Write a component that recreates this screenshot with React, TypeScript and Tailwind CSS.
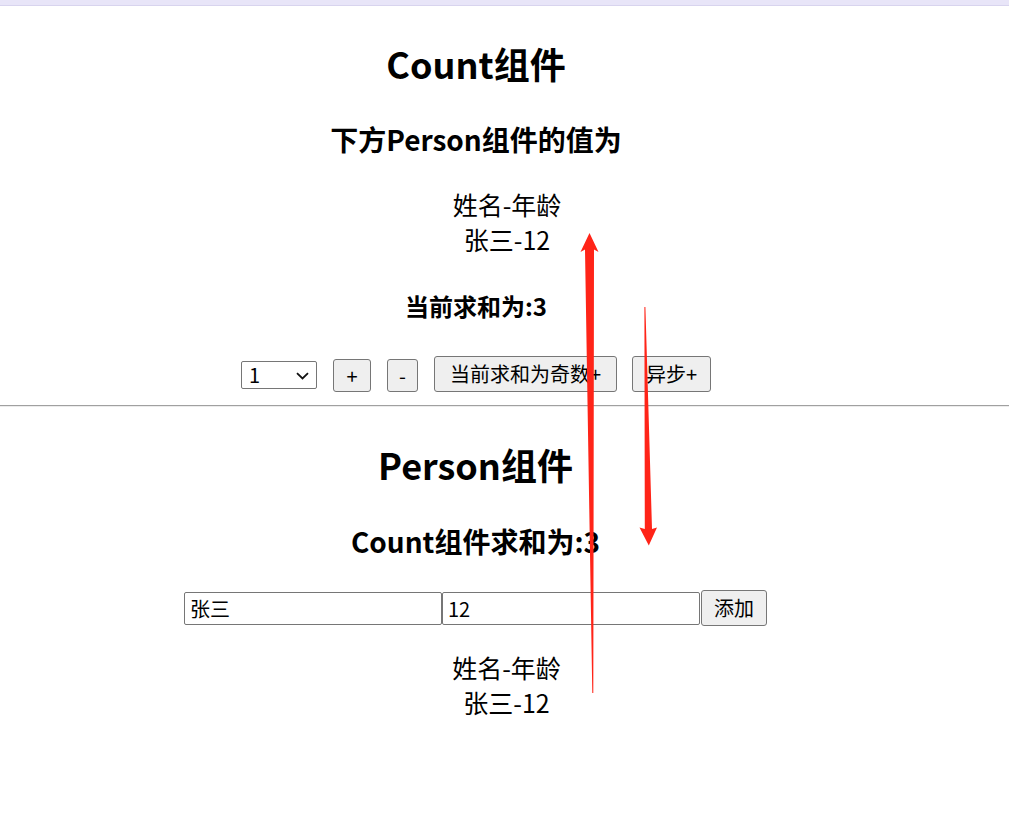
import { useState } from "react";

type Person = { id: number; name: string; age: number };

function PersonList({ people }: { people: Person[] }) {
  return (
    <ul className="pl-[62px] text-[25px] leading-[35px]">
      <li>姓名-年龄</li>
      {people.map((p) => (
        <li key={p.id}>
          {p.name}-{p.age}
        </li>
      ))}
    </ul>
  );
}

function Arrows() {
  return (
    <svg
      className="pointer-events-none absolute left-0 top-0"
      width="1009"
      height="833"
      viewBox="0 0 1009 833"
    >
      {/* long arrow pointing up */}
      <polygon
        fill="#ff2418"
        points="589.5,233 598.5,252 594,249.5 593.3,693 592.3,693 585,249.5 580.5,252"
      />
      {/* short arrow pointing down */}
      <polygon
        fill="#ff2418"
        points="644.4,307 645.4,307 652,529 657,527.5 648.8,545.5 639.5,527.5 644.8,529"
      />
    </svg>
  );
}

export default function App() {
  const [people] = useState<Person[]>([{ id: 1, name: "张三", age: 12 }]);
  const [step, setStep] = useState("1");
  const [sum, setSum] = useState(3);
  const [name, setName] = useState("张三");
  const [age, setAge] = useState("12");

  const n = Number(step);
  const btn =
    "h-[36px] rounded-[3px] border border-[#767676] bg-[#efefef] text-[20px] leading-[34px] text-black";
  const smallBtn =
    "h-[33px] rounded-[3px] border border-[#767676] bg-[#efefef] text-[20px] leading-[31px] text-black";

  return (
    <div className="relative h-[833px] w-full overflow-hidden bg-white text-black font-[family-name:'Noto_Sans_CJK_SC',sans-serif]">
      <div className="h-[6px] border-b border-[#d8d4ee] bg-[#e8e5f8]" />

      {/* Count */}
      <div className="w-[952px] text-center">
        <h1 className="mt-[33px] text-[36px] font-bold leading-[48px]">Count组件</h1>
        <h2 className="mt-[32px] text-[28px] font-bold leading-[40px]">下方Person组件的值为</h2>
        <div className="mt-[28px]">
          <PersonList people={people} />
        </div>
        <h3 className="mt-[32px] text-[24px] font-bold leading-[34px]">当前求和为:{sum}</h3>
        <div className="mt-[33px] flex h-[36px] items-end justify-center">
          <div className="relative mb-[3px]">
            <select
              value={step}
              onChange={(e) => setStep(e.target.value)}
              className="h-[28px] w-[76px] appearance-none rounded-[2px] border border-[#767676] bg-white pl-[7px] text-[20px] leading-[26px] outline-none"
            >
              <option value="1">1</option>
              <option value="2">2</option>
              <option value="3">3</option>
            </select>
            <svg
              className="pointer-events-none absolute right-[8px] top-[11px]"
              width="13"
              height="8"
              viewBox="0 0 13 8"
            >
              <path d="M1 1.2 L6.5 6.5 L12 1.2" fill="none" stroke="#111" strokeWidth="1.8" />
            </svg>
          </div>
          <button className={`ml-[16px] w-[38px] ${smallBtn}`} onClick={() => setSum(sum + n)}>
            +
          </button>
          <button className={`ml-[16px] w-[31px] ${smallBtn}`} onClick={() => setSum(sum - n)}>
            -
          </button>
          <button
            className={`ml-[16px] w-[183px] ${btn}`}
            onClick={() => sum % 2 !== 0 && setSum(sum + n)}
          >
            当前求和为奇数+
          </button>
          <button
            className={`ml-[15px] w-[79px] ${btn}`}
            onClick={() => setTimeout(() => setSum((s) => s + n), 500)}
          >
            异步+
          </button>
        </div>
      </div>

      <div className="mt-[13px] h-[2px] border-t border-[#a0a0a0] bg-[#ececec]" />

      {/* Person */}
      <div className="w-[951px] text-center">
        <h1 className="mt-[33px] text-[36px] font-bold leading-[48px]">Person组件</h1>
        <h2 className="mt-[33px] text-[28px] font-bold leading-[40px]">Count组件求和为:{sum}</h2>
        <div className="mt-[29px] flex h-[36px] items-center justify-center">
          <input
            value={name}
            onChange={(e) => setName(e.target.value)}
            className="h-[33px] w-[258px] rounded-[2px] border border-[#767676] px-[5px] text-[20px] outline-none"
          />
          <input
            value={age}
            onChange={(e) => setAge(e.target.value)}
            className="h-[33px] w-[258px] rounded-[2px] border border-[#767676] px-[5px] text-[20px] outline-none"
          />
          <button className="ml-[1px] h-[36px] w-[66px] rounded-[3px] border border-[#767676] bg-[#efefef] text-[20px] leading-[34px]">
            添加
          </button>
        </div>
        <div className="mt-[24px]">
          <PersonList people={people} />
        </div>
      </div>

      <Arrows />
    </div>
  );
}
